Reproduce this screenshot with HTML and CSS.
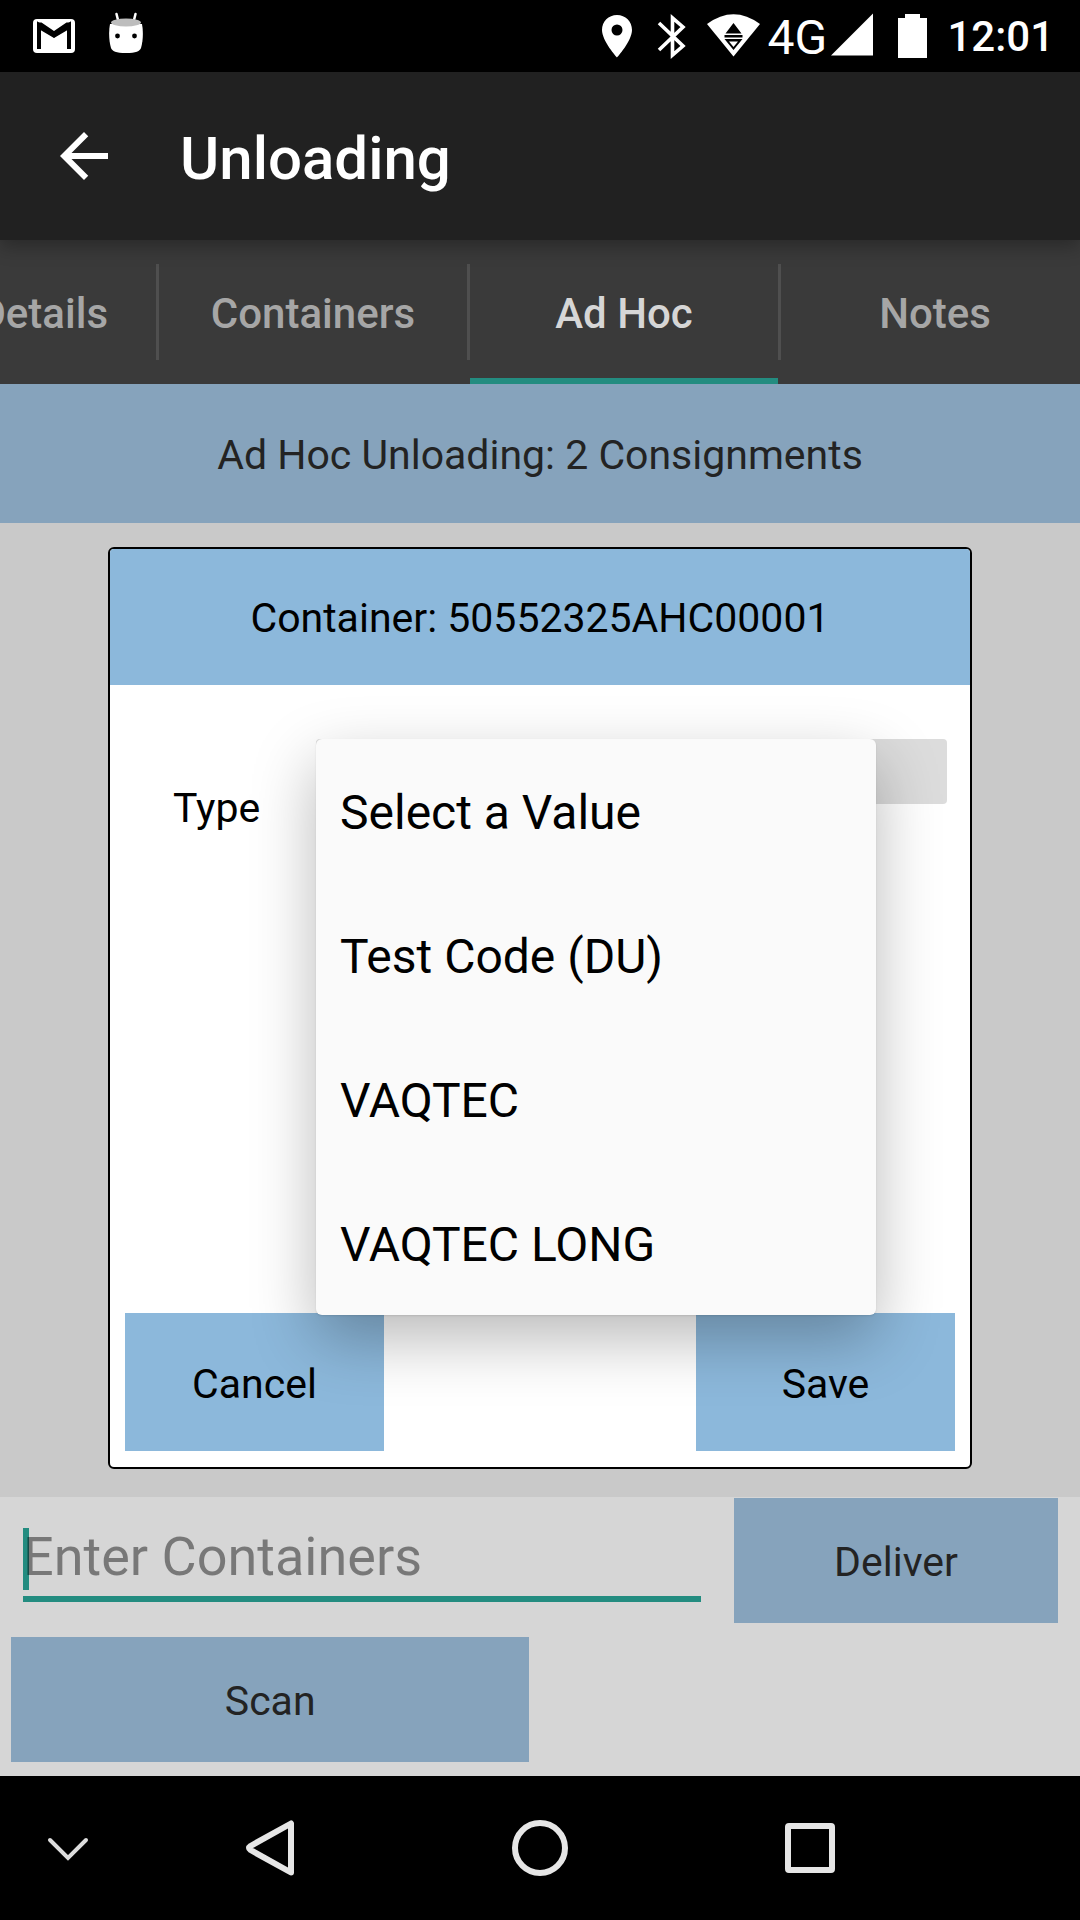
FILE: index.html
```html
<!DOCTYPE html>
<html lang="en">
<head>
<meta charset="utf-8">
<meta name="viewport" content="width=device-width, initial-scale=1">
<title>Unloading</title>
<link rel="stylesheet" href="styles.css">
</head>
<body>
<div class="status-bar">
  <div class="notifications">
    <svg width="42" height="72" viewBox="33 0 42 72" aria-label="Mail"><rect x="33" y="19" width="42" height="34" rx="4" fill="#fff"/><path d="M39 49V25l15 10 15-10v24" fill="none" stroke="#000" stroke-width="4"/><path d="M37 22.500h4.500L54 31l12.500-8.500H71V28L54 38 37 28z" fill="#000"/></svg>
    <svg width="34" height="72" viewBox="109 0 34 72" aria-label="Android"><path d="M116.500 14l2 8M135.500 14l-2 8" stroke="#fff" stroke-width="2.500" stroke-linecap="round"/><path d="M110 24h32c1.500 8 1 17-1 24-1 3-5 5-15 5s-14-2-15-5c-2-7-2.500-16-1-24z" fill="#fff"/><ellipse cx="126" cy="22.500" rx="15" ry="4" fill="#bdbdbd"/><circle cx="117.500" cy="36" r="2.400"/><circle cx="134.500" cy="36" r="2.400"/></svg>
  </div>
  <div class="indicators">
    <svg width="54" height="72" viewBox="592 0 54 72" aria-label="Location"><path fill="#fff" fill-rule="evenodd" d="M618 15c-8.500 0-15 6.500-15 15 0 11 15 27.500 15 27.500S633 41 633 30c0-8.500-6.500-15-15-15zm0 9.500a5.500 5.500 0 1 1 0 11 5.500 5.500 0 0 1 0-11z"/></svg>
    <svg width="54" height="72" viewBox="646 0 54 72" aria-label="Bluetooth"><path d="M660 23l24 23-10.500 9V18L684 27 660 50" fill="none" stroke="#fff" stroke-width="3.600"/></svg>
    <svg width="68" height="72" viewBox="700 0 68 72" aria-label="Wi-Fi"><path d="M708 24Q734.500 4.500 761 24L734.500 56.500z" fill="#fff"/><path d="M734.500 23l8 10.500h-16zM725.500 35h18v2.500h-18zM725.500 39h18l-9 11z"/><path d="M730 41.500h9l-4.500 5.500z" fill="#fff"/></svg>
    <span class="network">4G</span>
    <svg width="54" height="72" viewBox="828 0 54 72" aria-label="Signal"><path d="M832 55.500L874 13.500v42z" fill="#fff"/></svg>
    <svg width="60" height="72" viewBox="882 0 60 72" aria-label="Battery"><path d="M899 18h7v-4h15v4h7v40h-29z" fill="#fff"/></svg>
    <time class="clock">12:01</time>
  </div>
</div>

<header class="app-bar">
  <button class="back" type="button" aria-label="Back"><svg width="72" height="72" viewBox="0 0 24 24"><path d="M20 11H7.830l5.590-5.590L12 4l-8 8 8 8 1.410-1.410L7.830 13H20v-2z" fill="#fff"/></svg></button>
  <h1 class="title">Unloading</h1>
</header>

<nav class="tabs">
  <a class="tab tab-clipped" href="#details">Details</a>
  <a class="tab" href="#containers">Containers</a>
  <a class="tab tab-active" href="#adhoc" aria-current="page">Ad Hoc</a>
  <a class="tab" href="#notes">Notes</a>
</nav>

<h2 class="summary">Ad Hoc Unloading: 2 Consignments</h2>

<main class="content">
  <form class="dialog" role="dialog" aria-labelledby="dialog-title">
    <h3 class="dialog-title" id="dialog-title">Container: 50552325AHC00001</h3>
    <div class="field-row">
      <label class="field-label" for="type">Type</label>
      <select class="type-select" id="type"><option></option></select>
      <ul class="menu" role="listbox" aria-label="Type">
        <li><button class="option" type="button" role="option">Select a Value</button></li>
        <li><button class="option" type="button" role="option">Test Code (DU)</button></li>
        <li><button class="option" type="button" role="option">VAQTEC</button></li>
        <li><button class="option" type="button" role="option">VAQTEC LONG</button></li>
      </ul>
    </div>
    <div class="actions">
      <button class="action" type="button">Cancel</button>
      <button class="action" type="button">Save</button>
    </div>
  </form>
</main>

<section class="entry">
  <div class="entry-row">
    <div class="entry-field">
      <span class="caret"></span>
      <input class="entry-input" type="text" placeholder="Enter Containers" aria-label="Enter Containers">
    </div>
    <button class="dim-button deliver" type="button">Deliver</button>
  </div>
  <button class="dim-button scan" type="button">Scan</button>
</section>

<nav class="nav-bar">
  <button class="nav-button" type="button" aria-label="Hide keyboard"><svg width="60" height="60" viewBox="-30 -30 60 60"><path d="M-18-8L0 10 18-8" fill="none" stroke="#ddd" stroke-width="4" stroke-linecap="round"/></svg></button>
  <button class="nav-button" type="button" aria-label="Back"><svg width="60" height="60" viewBox="-30 -30 60 60"><path d="M21-24.500V24.500L-19.500 2Q-22.500 0-19.500-2z" fill="none" stroke="#e6e6e6" stroke-width="6" stroke-linejoin="round"/></svg></button>
  <button class="nav-button" type="button" aria-label="Home"><svg width="60" height="60" viewBox="-30 -30 60 60"><circle r="25" fill="none" stroke="#e6e6e6" stroke-width="6"/></svg></button>
  <button class="nav-button" type="button" aria-label="Recent apps"><svg width="60" height="60" viewBox="-30 -30 60 60"><rect x="-22" y="-22" width="44" height="44" rx="1" fill="none" stroke="#e6e6e6" stroke-width="6" stroke-linejoin="round"/></svg></button>
</nav>
</body>
</html>
```
FILE: styles.css
```css
* {
  box-sizing: border-box;
}

body {
  margin: 0;
  min-height: 100vh;
  display: flex;
  flex-direction: column;
  overflow-x: hidden;
  background: #c9c9c9;
  color: #000;
  font-family: Roboto, "Liberation Sans", sans-serif;
  font-size: 41px;
  line-height: 50px;
}

h1, h2, h3, ul {
  margin: 0;
  padding: 0;
  font-weight: 400;
  list-style: none;
}

button, input, select {
  margin: 0;
  padding: 0;
  border: 0;
  border-radius: 0;
  background: none;
  color: inherit;
  font: inherit;
}

svg {
  display: block;
  flex: none;
}

/* Status bar */
.status-bar {
  display: flex;
  justify-content: space-between;
  height: 72px;
  padding: 0 26px 0 33px;
  background: #000;
  color: #fff;
}

.notifications {
  display: flex;
  gap: 34px;
}

.indicators {
  display: flex;
  align-items: center;
}

.network {
  width: 60px;
  padding-top: 4px;
  font-size: 48px;
  line-height: 68px;
}

.clock {
  padding: 2px 0 0 6px;
  font-size: 42px;
  font-weight: 500;
  line-height: 70px;
}

/* App bar */
.app-bar {
  position: relative;
  z-index: 1;
  display: flex;
  align-items: center;
  gap: 60px;
  height: 168px;
  padding: 0 48px;
  background: #212121;
  color: #fff;
  box-shadow: 0 6px 18px rgba(0, 0, 0, 0.3);
}

.title {
  padding-top: 6px;
  font-size: 60px;
  font-weight: 500;
  line-height: 72px;
}

/* Tabs */
.tabs {
  display: grid;
  grid-template-columns: 156px repeat(3, 311px);
  height: 144px;
  overflow: hidden;
  background: #3a3a3a;
}

.tab {
  display: flex;
  align-items: center;
  justify-content: center;
  padding-top: 4px;
  border-left: 3px solid;
  border-image: linear-gradient(transparent 24px, #4f4f4f 24px, #4f4f4f 120px, transparent 120px) 0 0 0 3;
  color: #a6a6a6;
  font-size: 42px;
  font-weight: 500;
  text-decoration: none;
}

.tab-clipped {
  justify-content: flex-end;
  padding-right: 48px;
  border: 0;
}

.tab-active {
  color: #d6d6d6;
  background: linear-gradient(#238c80, #238c80) bottom / 100% 6px no-repeat padding-box;
}

/* Summary */
.summary {
  padding: 46px 24px 43px;
  background: #86a3bc;
  color: #232323;
  font-size: 41px;
  text-align: center;
}

/* Container dialog */
.content {
  flex: 1;
  display: flex;
  padding: 24px 10% 28px;
}

.dialog {
  flex: 1;
  display: flex;
  flex-direction: column;
  border: 2px solid #000;
  border-radius: 6px;
  background: #fff;
}

.dialog-title {
  padding: 44px 24px 42px;
  border-radius: 4px 4px 0 0;
  background: #8cb8db;
  font-size: 41px;
  text-align: center;
}

/* Stacked above the actions so that the open menu overlaps them */
.field-row {
  position: relative;
  z-index: 1;
  flex: 1;
  display: flex;
  align-items: flex-start;
  min-height: 628px;
  padding: 54px 23px 0 0;
}

.field-label {
  width: 206px;
  padding: 44px 0 0 63px;
}

.type-select {
  flex: 1;
  height: 65px;
  border-radius: 4px;
  background: #dcdcdc;
  appearance: none;
}

.menu {
  position: absolute;
  top: 54px;
  left: 206px;
  right: 94px;
  border-radius: 6px;
  background: #fafafa;
  box-shadow: 0 24px 64px rgba(0, 0, 0, 0.28), 0 1px 2px rgba(0, 0, 0, 0.1);
}

.option {
  display: block;
  width: 100%;
  height: 144px;
  padding: 4px 24px 0;
  font-size: 48px;
  line-height: 56px;
  text-align: left;
}

.actions {
  display: flex;
  justify-content: space-between;
  padding: 0 15px 16px;
}

.action {
  width: 259px;
  height: 138px;
  padding-top: 4px;
  background: #8cb8db;
}

/* Container entry */
.entry {
  display: flex;
  flex-direction: column;
  gap: 14px;
  padding: 1px 22px 14px 11px;
  background: #d6d6d6;
}

.entry-row {
  display: flex;
  align-items: flex-start;
  gap: 33px;
  padding-left: 12px;
}

.entry-field {
  position: relative;
  flex: 1;
}

.entry-input {
  position: relative;
  display: block;
  width: 100%;
  height: 104px;
  padding-top: 18px;
  border-bottom: 6px solid #238c80;
  font-size: 54px;
  line-height: 62px;
}

.entry-input::placeholder {
  color: rgba(0, 0, 0, 0.44);
  opacity: 1;
}

.caret {
  position: absolute;
  top: 30px;
  left: 0;
  width: 6px;
  height: 62px;
  background: #238c80;
}

.dim-button {
  height: 125px;
  padding-top: 2px;
  background: #86a3bc;
  color: #232323;
}

.deliver {
  width: 30vw;
}

.scan {
  width: 48vw;
}

/* System navigation */
.nav-bar {
  display: grid;
  grid-template-columns: 1fr 2fr 2fr 2fr 1fr;
  height: 144px;
  background: #000;
}

.nav-button {
  display: flex;
  align-items: center;
  justify-content: center;
}
```
